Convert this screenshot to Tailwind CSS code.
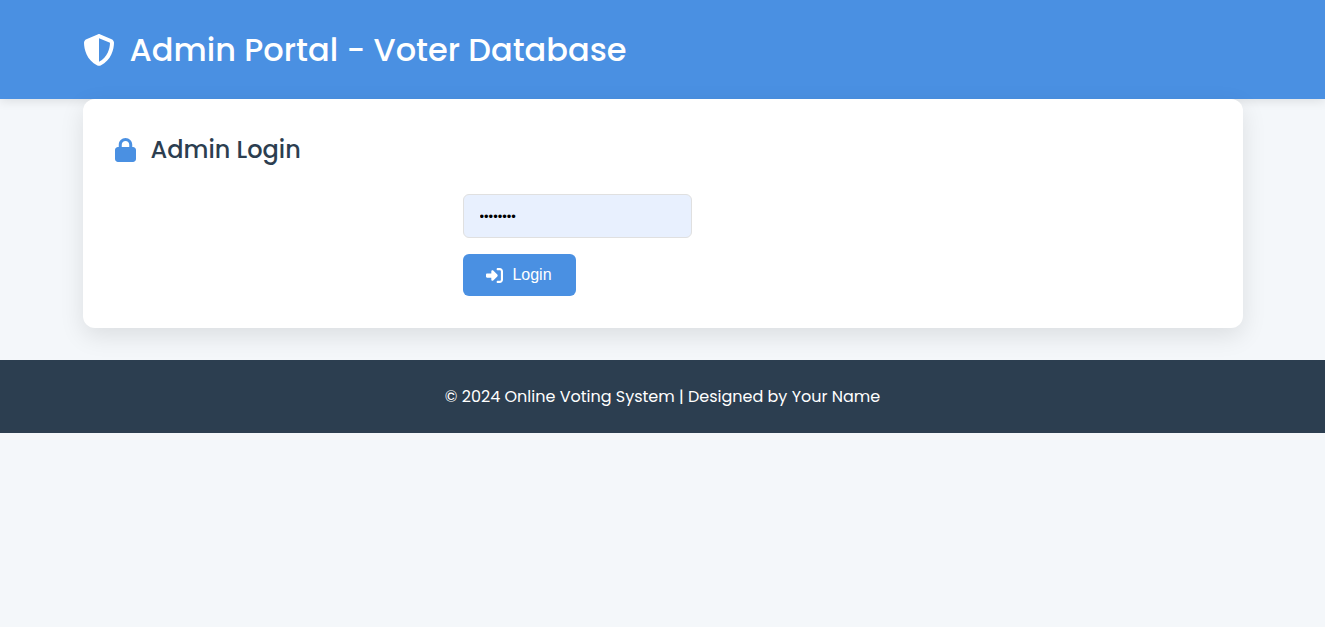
<!DOCTYPE html>
<html lang="en">
<head>
<meta charset="utf-8">
<meta name="viewport" content="width=device-width, initial-scale=1">
<title>Admin Portal - Voter Database</title>
<script src="https://cdn.jsdelivr.net/npm/@tailwindcss/browser@4"></script>
</head>
<body class="min-h-screen bg-[#f4f7fa] font-[Poppins,Inter,sans-serif] text-[#2c3e50]">
<header class="bg-[#4a90e2] py-6 text-white shadow-[0_2px_10px_rgba(0,0,0,0.1)]">
  <div class="mx-auto max-w-[1200px] px-5">
    <h1 class="flex items-center gap-[15px] text-[32px] leading-[51px] font-medium">
      <svg class="size-8 shrink-0" viewBox="0 0 512 512" fill="currentColor" aria-hidden="true"><path d="M256 0c4.600 0 9.200 1 13.400 2.900L457.700 82.800c22 9.300 38.400 31 38.300 57.200c-.5 99.200-41.300 280.700-213.600 363.200c-16.700 8-36.100 8-52.800 0C57.300 420.700 16.500 239.200 16 140c-.1-26.200 16.300-47.900 38.300-57.200L242.700 2.900C246.800 1 251.400 0 256 0zm0 66.800V444.800C394 378 431.100 230.100 432 141.400L256 66.800z"/></svg>
      <span>Admin Portal - Voter Database</span>
    </h1>
  </div>
</header>
<main class="mx-auto max-w-[1200px] px-5 pb-8">
  <section class="rounded-xl bg-white p-8 shadow-[0_8px_24px_rgba(0,0,0,0.1)]">
    <h2 class="mb-[25px] flex items-center gap-[15px] text-2xl leading-[38px] font-medium">
      <svg class="h-6 w-[21px] shrink-0 text-[#4a90e2]" viewBox="0 0 448 512" fill="currentColor" aria-hidden="true"><path d="M144 144v48H304V144c0-44.200-35.800-80-80-80s-80 35.800-80 80zM80 192V144C80 64.500 144.500 0 224 0s144 64.500 144 144v48h16c35.300 0 64 28.700 64 64V448c0 35.300-28.700 64-64 64H64c-35.300 0-64-28.700-64-64V256c0-35.300 28.700-64 64-64H80z"/></svg>
      <span>Admin Login</span>
    </h2>
    <form class="mx-auto flex max-w-[400px] flex-col items-start gap-4">
      <input type="password" value="password" aria-label="Password" class="h-11 w-[229px] rounded-md border border-[#e0e0e0] bg-[#e8f0fe] px-4 font-[Arial,'Liberation_Sans',sans-serif] text-[13px] text-black">
      <button type="button" class="flex h-[42px] w-[113px] items-center justify-center gap-[9px] rounded-md bg-[#4a90e2] font-[Arial,'Liberation_Sans',sans-serif] text-base text-white">
        <svg class="size-[17px] shrink-0" viewBox="0 0 512 512" fill="currentColor" aria-hidden="true"><path d="M217.900 105.900L340.700 228.700c7.200 7.200 11.300 17.100 11.300 27.300s-4.100 20.100-11.300 27.300L217.900 406.100c-6.400 6.400-15 9.900-24 9.900c-18.700 0-33.900-15.200-33.900-33.900l0-62.100L32 320c-17.700 0-32-14.300-32-32l0-64c0-17.700 14.300-32 32-32l128 0 0-62.100c0-18.700 15.200-33.900 33.900-33.900c9 0 17.600 3.600 24 9.900zM352 416l64 0c17.700 0 32-14.300 32-32l0-256c0-17.700-14.300-32-32-32l-64 0c-17.700 0-32-14.300-32-32s14.300-32 32-32l64 0c53 0 96 43 96 96l0 256c0 53-43 96-96 96l-64 0c-17.700 0-32-14.300-32-32s14.300-32 32-32z"/></svg>
        <span>Login</span>
      </button>
    </form>
  </section>
</main>
<footer class="bg-[#2c3e50] px-5 py-6 text-center text-base leading-[25px] text-white">
  <p>© 2024 Online Voting System | Designed by Your Name</p>
</footer>
</body>
</html>
